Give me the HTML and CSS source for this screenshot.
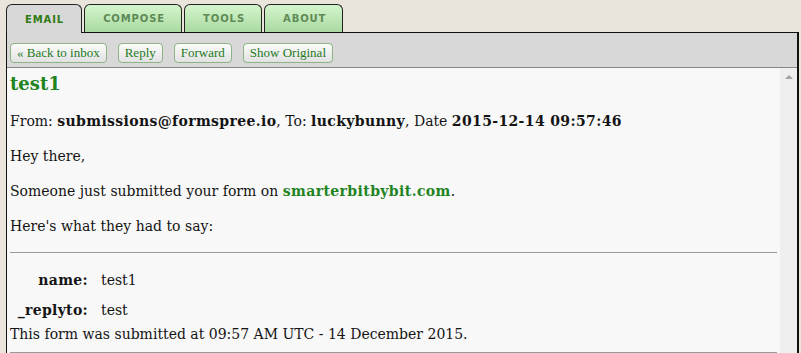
FILE: index.html
```html
<!DOCTYPE html>
<html lang="en">

<head>
    <meta charset="UTF-8">
    <title>Email</title>
    <link rel="stylesheet" href="styles.css">
</head>

<body>

    <!-- Tabs -->
    <div class="tabs">
        <div class="tab active">EMAIL</div>
        <div class="tab">COMPOSE</div>
        <div class="tab">TOOLS</div>
        <div class="tab">ABOUT</div>
    </div>

    <div class="panel">
        <!-- Toolbar -->
        <div class="toolbar">
            <button class="btn">&laquo; Back to inbox</button>
            <button class="btn">Reply</button>
            <button class="btn">Forward</button>
            <button class="btn">Show Original</button>
        </div>

        <div class="view">
            <div class="message">
                <h1 class="subject">test1</h1>
                <p class="meta">From: <b>submissions@formspree.io</b>, To: <b>luckybunny</b>, Date <b>2015-12-14 09:57:46</b></p>
                <p>Hey there,</p>
                <p>Someone just submitted your form on <a href="#" class="link">smarterbitbybit.com</a>.</p>
                <p>Here's what they had to say:</p>
                <hr>
                <table class="fields">
                    <tr>
                        <td class="label">name:</td>
                        <td class="value">test1</td>
                    </tr>
                    <tr class="last">
                        <td class="label">_replyto:</td>
                        <td class="value">test</td>
                    </tr>
                </table>
                <p class="footer">This form was submitted at 09:57 AM UTC - 14 December 2015.</p>
                <hr>
            </div>

            <!-- Scrollbar -->
            <div class="scrollbar">
                <div class="arrow"></div>
            </div>
        </div>
    </div>

</body>

</html>
```

FILE: styles.css
```css
/* General Reset */
* {
    margin: 0;
    padding: 0;
    box-sizing: border-box;
}

body {
    background: #e9e5db;
    font-family: "DejaVu Serif", Georgia, serif;
    color: #141414;
    height: 353px;
    overflow: hidden;
}

/* Tabs */
.tabs {
    display: flex;
    gap: 2px;
    padding: 4px 0 0 6px;
}

.tab {
    height: 28px;
    padding: 0 16px 0 18px;
    border: 1px solid #222;
    border-bottom: none;
    border-radius: 6px 6px 0 0;
    background: linear-gradient(#d4f5cc, #a9d9a0);
    font-family: "DejaVu Sans", Verdana, sans-serif;
    font-size: 10px;
    font-weight: bold;
    letter-spacing: 0.9px;
    color: #5e8a55;
    display: flex;
    align-items: center;
}

.tab.active {
    background: #d8d8d8;
    color: #2f7a12;
    height: 29px;
    padding-right: 17px;
    margin-bottom: -1px;
    position: relative;
    z-index: 1;
}

/* Panel */
.panel {
    margin-left: 6px;
    width: 793px;
    border: 1px solid #111;
    border-right-width: 2px;
    background: #d8d8d8;
}

/* Toolbar */
.toolbar {
    display: flex;
    gap: 11px;
    padding: 10px 3px 4px;
    border-bottom: 1px solid #888;
}

.btn {
    height: 20px;
    padding: 0 6px;
    border: 1px solid #8db485;
    border-radius: 4px;
    background: linear-gradient(#fbfbfb, #e2e2e2);
    color: #1e7a1e;
    font-family: "Liberation Serif", "Times New Roman", serif;
    font-size: 13px;
    cursor: pointer;
}

/* Message view */
.view {
    display: flex;
    background: #f8f8f8;
    height: 300px;
}

.message {
    flex: 1;
    padding: 0 3px;
    font-size: 14px;
    line-height: 20px;
}

.message b {
    letter-spacing: 0.36px;
}

.subject {
    margin-top: 5px;
    font-size: 18px;
    line-height: 22px;
    color: #1f841f;
}

.message p {
    margin-top: 15px;
}

.message p.meta {
    margin-top: 16px;
}

.link {
    color: #1f841f;
    font-weight: bold;
    letter-spacing: 0.4px;
    text-decoration: none;
}

.message hr {
    border: none;
    border-top: 1px solid #999;
    margin-top: 16px;
}

/* Form fields */
.fields {
    border-spacing: 0;
    margin-top: 12px;
}

.fields td {
    height: 30px;
}

.fields .last td {
    height: 29px;
}

.fields .label {
    font-weight: bold;
    letter-spacing: 0.3px;
    text-align: right;
    padding: 0 7px 0 2px;
    width: 85px;
}

.fields .value {
    padding-left: 6px;
}

.message p.footer {
    margin-top: 0;
}

.message p.footer + hr {
    margin-top: 8px;
}

/* Scrollbar */
.scrollbar {
    width: 17px;
    background: #efefef;
    padding-top: 7px;
}

.arrow {
    margin: 0 auto;
    width: 0;
    height: 0;
    border-left: 4px solid transparent;
    border-right: 4px solid transparent;
    border-bottom: 4px solid #a3a3a3;
}
```
